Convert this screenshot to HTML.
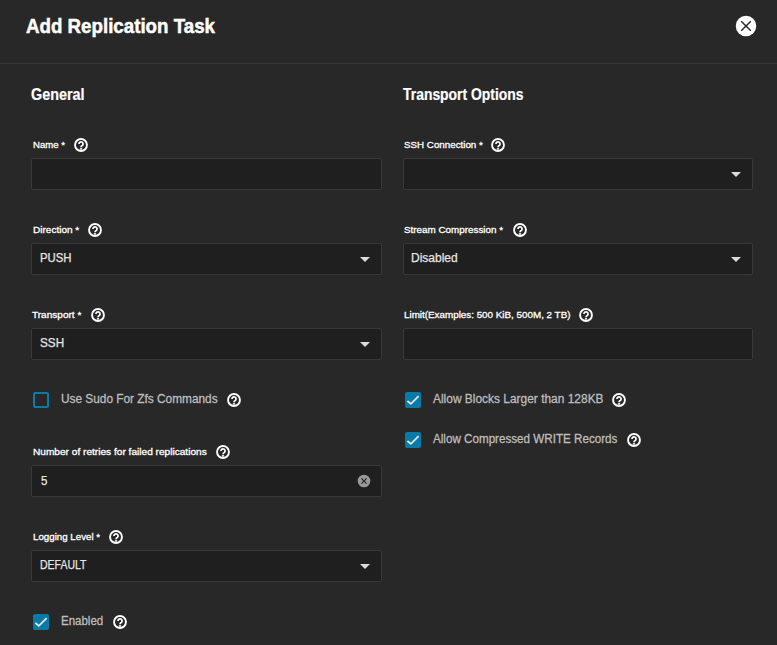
<!DOCTYPE html><html><head><meta charset="utf-8"><style>
*{margin:0;padding:0;box-sizing:border-box}
html,body{width:777px;height:645px;overflow:hidden;background:#282828;font-family:"Liberation Sans",sans-serif}
.t{position:absolute;white-space:nowrap;transform-origin:0 0}
.hdr{position:absolute;left:0;top:63px;width:777px;height:1px;background:#383838}
.inp{position:absolute;background:#1f1f1f;border:1px solid #393939;border-radius:2px}
.arr{position:absolute;width:0;height:0;border-left:5px solid transparent;border-right:5px solid transparent;border-top:5px solid #dcdcdc}
.cb{position:absolute;width:16px;height:16px;border:2px solid #0a7aa8;border-radius:2px}
.cb.on{background:#0a7aa8}
.cb svg{position:absolute;left:-2px;top:-2px}
.ic{position:absolute}
</style></head><body>
<div class="hdr"></div>
<div class="inp" style="left:31px;top:158px;width:351px;height:32px"></div>
<div class="inp" style="left:31px;top:243px;width:351px;height:32px"></div>
<div class="inp" style="left:31px;top:328px;width:351px;height:32px"></div>
<div class="inp" style="left:31px;top:465px;width:351px;height:32px"></div>
<div class="inp" style="left:31px;top:550px;width:351px;height:32px"></div>
<div class="inp" style="left:403px;top:158px;width:350px;height:32px"></div>
<div class="inp" style="left:403px;top:243px;width:350px;height:32px"></div>
<div class="inp" style="left:403px;top:328px;width:350px;height:32px"></div>
<div class="arr" style="left:360px;top:257px"></div>
<div class="arr" style="left:360px;top:342px"></div>
<div class="arr" style="left:360px;top:564px"></div>
<div class="arr" style="left:731px;top:172px"></div>
<div class="arr" style="left:731px;top:257px"></div>
<div class="cb" style="left:33px;top:392px"></div>
<div class="cb on" style="left:405px;top:392px"><svg width="16" height="16" viewBox="0 0 16 16"><path d="M2.4 9 L5.9 11.9 L13.6 4.2" fill="none" stroke="#e6e6e6" stroke-width="1.8"/></svg></div>
<div class="cb on" style="left:405px;top:432px"><svg width="16" height="16" viewBox="0 0 16 16"><path d="M2.4 9 L5.9 11.9 L13.6 4.2" fill="none" stroke="#e6e6e6" stroke-width="1.8"/></svg></div>
<div class="cb on" style="left:33px;top:614px"><svg width="16" height="16" viewBox="0 0 16 16"><path d="M2.4 9 L5.9 11.9 L13.6 4.2" fill="none" stroke="#e6e6e6" stroke-width="1.8"/></svg></div>
<svg class="ic" style="left:74.00px;top:138.00px" width="14" height="14" viewBox="0 0 14 14"><circle cx="7" cy="7" r="5.95" fill="none" stroke="#fff" stroke-width="1.9"/><path d="M4.95 5.9A2.05 2.05 0 1 1 8.5 7.3C7.6 8 7 8.2 7 9.2" fill="none" stroke="#fff" stroke-width="1.7"/><rect x="5.9" y="10.1" width="2.2" height="1.5" fill="#fff"/></svg>
<svg class="ic" style="left:87.50px;top:223.00px" width="14" height="14" viewBox="0 0 14 14"><circle cx="7" cy="7" r="5.95" fill="none" stroke="#fff" stroke-width="1.9"/><path d="M4.95 5.9A2.05 2.05 0 1 1 8.5 7.3C7.6 8 7 8.2 7 9.2" fill="none" stroke="#fff" stroke-width="1.7"/><rect x="5.9" y="10.1" width="2.2" height="1.5" fill="#fff"/></svg>
<svg class="ic" style="left:90.50px;top:308.00px" width="14" height="14" viewBox="0 0 14 14"><circle cx="7" cy="7" r="5.95" fill="none" stroke="#fff" stroke-width="1.9"/><path d="M4.95 5.9A2.05 2.05 0 1 1 8.5 7.3C7.6 8 7 8.2 7 9.2" fill="none" stroke="#fff" stroke-width="1.7"/><rect x="5.9" y="10.1" width="2.2" height="1.5" fill="#fff"/></svg>
<svg class="ic" style="left:215.80px;top:445.00px" width="14" height="14" viewBox="0 0 14 14"><circle cx="7" cy="7" r="5.95" fill="none" stroke="#fff" stroke-width="1.9"/><path d="M4.95 5.9A2.05 2.05 0 1 1 8.5 7.3C7.6 8 7 8.2 7 9.2" fill="none" stroke="#fff" stroke-width="1.7"/><rect x="5.9" y="10.1" width="2.2" height="1.5" fill="#fff"/></svg>
<svg class="ic" style="left:109.00px;top:530.00px" width="14" height="14" viewBox="0 0 14 14"><circle cx="7" cy="7" r="5.95" fill="none" stroke="#fff" stroke-width="1.9"/><path d="M4.95 5.9A2.05 2.05 0 1 1 8.5 7.3C7.6 8 7 8.2 7 9.2" fill="none" stroke="#fff" stroke-width="1.7"/><rect x="5.9" y="10.1" width="2.2" height="1.5" fill="#fff"/></svg>
<svg class="ic" style="left:490.80px;top:138.00px" width="14" height="14" viewBox="0 0 14 14"><circle cx="7" cy="7" r="5.95" fill="none" stroke="#fff" stroke-width="1.9"/><path d="M4.95 5.9A2.05 2.05 0 1 1 8.5 7.3C7.6 8 7 8.2 7 9.2" fill="none" stroke="#fff" stroke-width="1.7"/><rect x="5.9" y="10.1" width="2.2" height="1.5" fill="#fff"/></svg>
<svg class="ic" style="left:512.70px;top:223.00px" width="14" height="14" viewBox="0 0 14 14"><circle cx="7" cy="7" r="5.95" fill="none" stroke="#fff" stroke-width="1.9"/><path d="M4.95 5.9A2.05 2.05 0 1 1 8.5 7.3C7.6 8 7 8.2 7 9.2" fill="none" stroke="#fff" stroke-width="1.7"/><rect x="5.9" y="10.1" width="2.2" height="1.5" fill="#fff"/></svg>
<svg class="ic" style="left:579.00px;top:308.00px" width="14" height="14" viewBox="0 0 14 14"><circle cx="7" cy="7" r="5.95" fill="none" stroke="#fff" stroke-width="1.9"/><path d="M4.95 5.9A2.05 2.05 0 1 1 8.5 7.3C7.6 8 7 8.2 7 9.2" fill="none" stroke="#fff" stroke-width="1.7"/><rect x="5.9" y="10.1" width="2.2" height="1.5" fill="#fff"/></svg>
<svg class="ic" style="left:226.60px;top:393.00px" width="14" height="14" viewBox="0 0 14 14"><circle cx="7" cy="7" r="5.95" fill="none" stroke="#fff" stroke-width="1.9"/><path d="M4.95 5.9A2.05 2.05 0 1 1 8.5 7.3C7.6 8 7 8.2 7 9.2" fill="none" stroke="#fff" stroke-width="1.7"/><rect x="5.9" y="10.1" width="2.2" height="1.5" fill="#fff"/></svg>
<svg class="ic" style="left:611.50px;top:393.00px" width="14" height="14" viewBox="0 0 14 14"><circle cx="7" cy="7" r="5.95" fill="none" stroke="#fff" stroke-width="1.9"/><path d="M4.95 5.9A2.05 2.05 0 1 1 8.5 7.3C7.6 8 7 8.2 7 9.2" fill="none" stroke="#fff" stroke-width="1.7"/><rect x="5.9" y="10.1" width="2.2" height="1.5" fill="#fff"/></svg>
<svg class="ic" style="left:626.80px;top:433.00px" width="14" height="14" viewBox="0 0 14 14"><circle cx="7" cy="7" r="5.95" fill="none" stroke="#fff" stroke-width="1.9"/><path d="M4.95 5.9A2.05 2.05 0 1 1 8.5 7.3C7.6 8 7 8.2 7 9.2" fill="none" stroke="#fff" stroke-width="1.7"/><rect x="5.9" y="10.1" width="2.2" height="1.5" fill="#fff"/></svg>
<svg class="ic" style="left:113.00px;top:615.00px" width="14" height="14" viewBox="0 0 14 14"><circle cx="7" cy="7" r="5.95" fill="none" stroke="#fff" stroke-width="1.9"/><path d="M4.95 5.9A2.05 2.05 0 1 1 8.5 7.3C7.6 8 7 8.2 7 9.2" fill="none" stroke="#fff" stroke-width="1.7"/><rect x="5.9" y="10.1" width="2.2" height="1.5" fill="#fff"/></svg>
<svg class="ic" style="left:734px;top:14px" width="24" height="24" viewBox="0 0 24 24"><circle cx="12" cy="12" r="10.25" fill="#fff"/><path d="M7.2 7.2L16.8 16.8M16.8 7.2L7.2 16.8" stroke="#282828" stroke-width="1.45"/></svg>
<svg class="ic" style="left:356.4px;top:472.7px" width="16" height="16" viewBox="0 0 16 16"><circle cx="8" cy="8" r="6.3" fill="#999"/><path d="M5.45 5.45L10.55 10.55M10.55 5.45L5.45 10.55" stroke="#222" stroke-width="1.1"/></svg>
<div class="t" style="left:26.2px;top:15px;font-size:21px;line-height:21px;font-weight:bold;color:#ffffff;transform:scaleX(0.8915);-webkit-text-stroke:0.5px #ffffff">Add Replication Task</div>
<div class="t" style="left:31.0px;top:87px;font-size:16px;line-height:16px;font-weight:bold;color:#ffffff;transform:scaleX(0.8983);-webkit-text-stroke:0.2px #ffffff">General</div>
<div class="t" style="left:403.0px;top:87px;font-size:16px;line-height:16px;font-weight:bold;color:#ffffff;transform:scaleX(0.8696);-webkit-text-stroke:0.2px #ffffff">Transport Options</div>
<div class="t" style="left:33.0px;top:140px;font-size:9.6px;line-height:9.6px;font-weight:normal;color:#ffffff;transform:scaleX(1.0);-webkit-text-stroke:0.3px #ffffff">Name *</div>
<div class="t" style="left:32.6px;top:225px;font-size:9.6px;line-height:9.6px;font-weight:normal;color:#ffffff;transform:scaleX(1.0455);-webkit-text-stroke:0.3px #ffffff">Direction *</div>
<div class="t" style="left:32.3px;top:310px;font-size:9.6px;line-height:9.6px;font-weight:normal;color:#ffffff;transform:scaleX(1.0468);-webkit-text-stroke:0.3px #ffffff">Transport *</div>
<div class="t" style="left:32.9px;top:447px;font-size:9.6px;line-height:9.6px;font-weight:normal;color:#ffffff;transform:scaleX(1.0545);-webkit-text-stroke:0.3px #ffffff">Number of retries for failed replications</div>
<div class="t" style="left:33.0px;top:532px;font-size:9.6px;line-height:9.6px;font-weight:normal;color:#ffffff;transform:scaleX(1.0152);-webkit-text-stroke:0.3px #ffffff">Logging Level *</div>
<div class="t" style="left:403.5px;top:140px;font-size:9.6px;line-height:9.6px;font-weight:normal;color:#ffffff;transform:scaleX(1.0195);-webkit-text-stroke:0.3px #ffffff">SSH Connection *</div>
<div class="t" style="left:403.7px;top:225px;font-size:9.6px;line-height:9.6px;font-weight:normal;color:#ffffff;transform:scaleX(1.0268);-webkit-text-stroke:0.3px #ffffff">Stream Compression *</div>
<div class="t" style="left:403.9px;top:310px;font-size:9.6px;line-height:9.6px;font-weight:normal;color:#ffffff;transform:scaleX(1.0247);-webkit-text-stroke:0.3px #ffffff">Limit(Examples: 500 KiB, 500M, 2 TB)</div>
<div class="t" style="left:40.09px;top:252px;font-size:12.5px;line-height:12.5px;font-weight:normal;color:#e6e6e6;transform:scaleX(0.9091);-webkit-text-stroke:0.25px #e6e6e6">PUSH</div>
<div class="t" style="left:39.56px;top:337px;font-size:12.5px;line-height:12.5px;font-weight:normal;color:#e6e6e6;transform:scaleX(0.9375);-webkit-text-stroke:0.25px #e6e6e6">SSH</div>
<div class="t" style="left:40.6px;top:475px;font-size:12.5px;line-height:12.5px;font-weight:normal;color:#e6e6e6;transform:scaleX(0.9143);-webkit-text-stroke:0.25px #e6e6e6">5</div>
<div class="t" style="left:40.26px;top:559px;font-size:12.5px;line-height:12.5px;font-weight:normal;color:#e6e6e6;transform:scaleX(0.84);-webkit-text-stroke:0.25px #e6e6e6">DEFAULT</div>
<div class="t" style="left:411.24px;top:252px;font-size:12.5px;line-height:12.5px;font-weight:normal;color:#e6e6e6;transform:scaleX(0.9596);-webkit-text-stroke:0.25px #e6e6e6">Disabled</div>
<div class="t" style="left:61.05px;top:393px;font-size:12.5px;line-height:12.5px;font-weight:normal;color:#bdbdbd;transform:scaleX(0.947);-webkit-text-stroke:0.3px #bdbdbd">Use Sudo For Zfs Commands</div>
<div class="t" style="left:432.6px;top:393px;font-size:12.5px;line-height:12.5px;font-weight:normal;color:#bdbdbd;transform:scaleX(0.9551);-webkit-text-stroke:0.3px #bdbdbd">Allow Blocks Larger than 128KB</div>
<div class="t" style="left:432.6px;top:433px;font-size:12.5px;line-height:12.5px;font-weight:normal;color:#bdbdbd;transform:scaleX(0.9313);-webkit-text-stroke:0.3px #bdbdbd">Allow Compressed WRITE Records</div>
<div class="t" style="left:61.08px;top:615px;font-size:12.5px;line-height:12.5px;font-weight:normal;color:#bdbdbd;transform:scaleX(0.92);-webkit-text-stroke:0.3px #bdbdbd">Enabled</div>
</body></html>
